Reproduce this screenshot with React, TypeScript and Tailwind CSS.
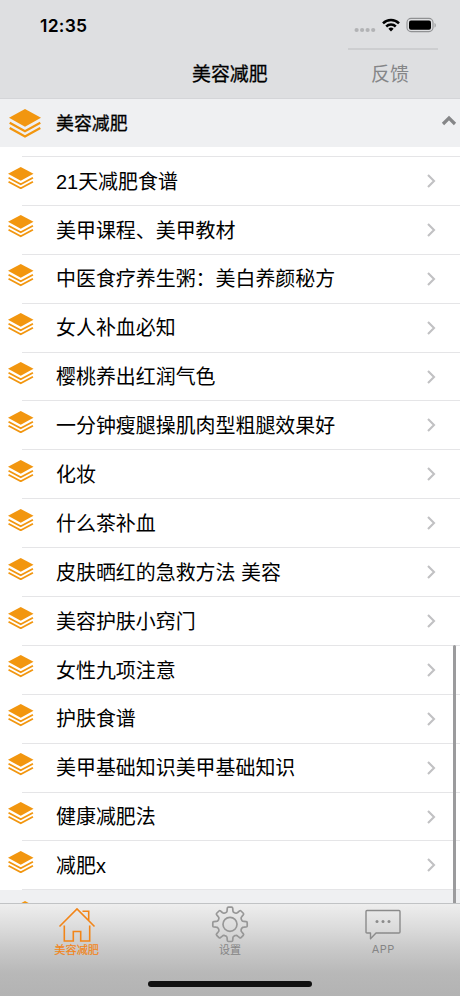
import React from "react";

const items = [
  "21天减肥食谱",
  "美甲课程、美甲教材",
  "中医食疗养生粥：美白养颜秘方",
  "女人补血必知",
  "樱桃养出红润气色",
  "一分钟瘦腿操肌肉型粗腿效果好",
  "化妆",
  "什么茶补血",
  "皮肤晒红的急救方法 美容",
  "美容护肤小窍门",
  "女性九项注意",
  "护肤食谱",
  "美甲基础知识美甲基础知识",
  "健康减肥法",
  "减肥x",
];

// Outline of an eight-toothed gear centred on the origin.
const gearPath = (() => {
  const parts: string[] = [];
  for (let k = 0; k < 8; k++) {
    const a = (k * Math.PI) / 4;
    const at = (x: number, y: number) =>
      `${(x * Math.cos(a) - y * Math.sin(a)).toFixed(2)} ${(x * Math.sin(a) + y * Math.cos(a)).toFixed(2)}`;
    parts.push(`${k ? "L" : "M"}${at(-3.6, -12.1)}`);
    parts.push(`Q${at(-2.9, -12.6)} ${at(-2.9, -13.8)}L${at(-2.7, -16.2)}Q${at(-2.6, -17.2)} ${at(-1.6, -17.2)}`);
    parts.push(`L${at(1.6, -17.2)}Q${at(2.6, -17.2)} ${at(2.7, -16.2)}L${at(2.9, -13.8)}Q${at(2.9, -12.6)} ${at(3.6, -12.1)}`);
    parts.push(`Q${at(4.4, -11.3)} ${at(5.2, -11.3)}`);
  }
  return parts.join("") + "Z";
})();

function Layers({ className }: { className: string }) {
  return (
    <svg viewBox="0 0 32 29" className={className} fill="none" preserveAspectRatio="none">
      <path d="M16 0 32 8.8 16 17.8 0 8.8Z" fill="#f2960f" />
      <path d="M.7 13.800 16 22.200l15.300-8.400M.7 19 16 27.400 31.300 19" stroke="#f2960f" strokeWidth="2.3" />
    </svg>
  );
}

function StatusBar() {
  return (
    <div className="flex h-[48px] items-start justify-between pl-[40px] pr-[23px] pt-[15px]">
      <span className="font-['Inter'] text-[17.5px] font-semibold leading-[22px] tracking-[0.25px]">12:35</span>
      <div className="flex items-start">
        <svg width="22" height="6" viewBox="0 0 22 6" className="mt-[12px]" fill="#b2b3b5">
          <circle cx="2.6" cy="3" r="2.1" />
          <circle cx="8.1" cy="3" r="2.1" />
          <circle cx="13.6" cy="3" r="2.1" />
          <circle cx="19.2" cy="3" r="2.1" />
        </svg>
        <svg width="18" height="14" viewBox="0 0 18 14" className="ml-[6px] mt-[3px]" fill="none" stroke="#000" strokeWidth="2.5">
          <path d="M1 5.3a11.3 11.3 0 0 1 16 0" />
          <path d="M4.2 8.5a6.9 6.9 0 0 1 9.6 0" />
          <path d="M9 13.4 6.4 10.8a3.7 3.7 0 0 1 5.2 0Z" fill="#000" stroke="none" />
        </svg>
        <svg width="31" height="16" viewBox="0 0 31 16" className="ml-[6px] mt-[2px]" fill="none">
          <rect x="1" y="1.4" width="26" height="13.2" rx="4" stroke="#909193" strokeWidth="1.1" />
          <rect x="3" y="3.4" width="22" height="9.4" rx="2" fill="#000" />
          <path d="M28.6 6v4.6c1.5-.6 1.5-4 0-4.6Z" fill="#909193" />
        </svg>
      </div>
    </div>
  );
}

function Row({ text }: { text: string }) {
  return (
    <li className="flex h-[48.9px] items-start">
      <Layers className="ml-[8px] mt-[9.5px] h-[22.5px] w-[25.5px] shrink-0" />
      <div className="-ml-[11.5px] flex h-full flex-1 items-center border-b border-[#e5e5e7] pl-[34px]">
        <span className="flex-1 whitespace-pre pt-[1.5px] text-[19.95px] leading-[28px]">{text}</span>
        <svg width="9" height="14" viewBox="0 0 9 14" className="mr-[24.5px]" fill="none" stroke="#c1c1c3" strokeWidth="2.1">
          <path d="m1 1 6 6-6 6" />
        </svg>
      </div>
    </li>
  );
}

function Tab({ label, className, labelClass, children }: { label: string; className: string; labelClass: string; children: React.ReactNode }) {
  return (
    <div className={`flex w-[153.33px] flex-col items-center ${className}`}>
      {children}
      <span className={`whitespace-nowrap leading-[14px] ${labelClass}`}>{label}</span>
    </div>
  );
}

export default function App() {
  return (
    <div className="relative flex h-[996px] w-[460px] flex-col overflow-hidden bg-white font-['Liberation_Sans','Noto_Sans_CJK_SC',sans-serif] text-black">
      <header className="h-[99px] shrink-0 border-b border-[#d4d5d8] bg-[#dedfe1]">
        <StatusBar />
        <div className="grid grid-cols-[1fr_76px_1fr]">
          <span />
          <h1 className="mt-[13px] whitespace-nowrap text-[18.9px] leading-[28px] [-webkit-text-stroke:0.3px_#000]">美容减肥</h1>
          <div className="ml-[80px] w-[90px] border-t-2 border-[#cdced0] pt-[11px] text-center">
            <span className="relative -left-[3px] text-[19px] leading-[28px] text-[#858688]">反馈</span>
          </div>
        </div>
      </header>
      <main className="flex h-[804px] shrink-0 flex-col overflow-hidden">
        <div className="flex h-[48px] shrink-0 items-center bg-[#eff0f2]">
          <Layers className="ml-[9px] mt-[1px] h-[29px] w-[32px]" />
          <h2 className="ml-[15px] flex-1 pt-[1px] text-[17.9px] leading-[26px] [-webkit-text-stroke:0.3px_#000]">美容减肥</h2>
          <svg width="16" height="11" viewBox="0 0 16 11" className="-mt-[5px] mr-[3px]" fill="none" stroke="#858688" strokeWidth="3.2">
            <path d="m2 9 6-6 6 6" />
          </svg>
        </div>
        <div className="ml-[22px] h-[10px] shrink-0 border-b border-[#e5e5e7]" />
        <ul className="shrink-0">
          {items.map((t) => <Row key={t} text={t} />)}
        </ul>
        <div className="h-[49px] shrink-0 bg-[#eff0f2] pl-[9px] pt-[11px]">
          <Layers className="h-[29px] w-[32px]" />
        </div>
      </main>
      <nav className="flex h-[93px] shrink-0 border-t border-[#c1c3c5] bg-[linear-gradient(to_bottom,#eeeeee_0%,#dcdcdc_25%,#c8c8c8_50%,#b8b8b8_75%,#b3b3b3_100%)]">
        <Tab label="美容减肥" className="text-[#f28518]" labelClass="text-[11.2px] mt-[1px] [-webkit-text-stroke:0.15px_#f28518]">
          <svg width="38" height="38" viewBox="0 0 38 38" fill="none" stroke="currentColor" strokeWidth="1.6">
            <path d="M1.5 22.5 19 5l17.5 17.5M6.3 21.5V37h9v-9.5h7.4V37h9V21.5M24.5 7.2h6.2v9" />
          </svg>
        </Tab>
        <Tab label="设置" className="text-[#858585]" labelClass="text-[11px] mt-[1px]">
          <svg width="38" height="38" viewBox="0 0 38 38" className="overflow-visible" fill="none" stroke="#979797" strokeWidth="1.7" strokeLinejoin="round">
            <circle cx="19" cy="20.3" r="7" />
            <path d={gearPath} transform="translate(19 20.3)" />
          </svg>
        </Tab>
        <Tab label="APP" className="text-[#858585]" labelClass="font-['Inter'] text-[11px] tracking-[0.5px]">
          <svg width="38" height="38" viewBox="0 0 38 38" fill="none" stroke="#8b8b8b" strokeWidth="1.4" strokeLinejoin="round">
            <path d="M3 6.5h32q1 0 1 1V28q0 1-1 1H12l-5.500 5.800V29H3q-1 0-1-1V7.500q0-1 1-1Z" />
            <g fill="#8b8b8b" stroke="none"><circle cx="13" cy="17.5" r="1.5" /><circle cx="19" cy="17.5" r="1.5" /><circle cx="25" cy="17.5" r="1.5" /></g>
          </svg>
        </Tab>
      </nav>
      <div className="absolute left-[453px] top-[645px] h-[258px] w-[3px] rounded-t-full bg-[#9b9b9d]" />
      <div className="absolute left-[148px] top-[981px] h-[5.5px] w-[164px] rounded-full bg-[#111]" />
    </div>
  );
}
